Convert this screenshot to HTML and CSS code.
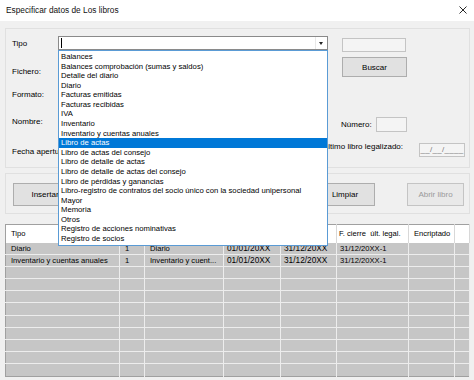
FILE: index.html
```html
<!DOCTYPE html>
<html>
<head>
    <title>Especificar datos de Los libros</title>
    <link rel="stylesheet" href="styles.css">
</head>
<body>

<div class="window">
    <div class="titlebar">
        <span class="title">Especificar datos de Los libros</span>
        <svg class="close" width="8" height="8" viewBox="0 0 8 8">
            <path d="M0.5 0.5L7.5 7.5M7.5 0.5L0.5 7.5" stroke="#111" stroke-width="0.9" fill="none"/>
        </svg>
    </div>

    <div class="client">
        <div class="group group-datos">
            <span class="lbl lbl-tipo">Tipo</span>
            <div class="combo">
                <span class="caret"></span>
                <span class="combo-arrow"></span>
                <ul class="dropdown">
                    <li>Balances</li>
                    <li>Balances comprobación (sumas y saldos)</li>
                    <li>Detalle del diario</li>
                    <li>Diario</li>
                    <li>Facturas emitidas</li>
                    <li>Facturas recibidas</li>
                    <li>IVA</li>
                    <li>Inventario</li>
                    <li>Inventario y cuentas anuales</li>
                    <li class="selected">Libro de actas</li>
                    <li>Libro de actas del consejo</li>
                    <li>Libro de detalle de actas</li>
                    <li>Libro de detalle de actas del consejo</li>
                    <li>Libro de pérdidas y ganancias</li>
                    <li>Libro-registro de contratos del socio único con la sociedad unipersonal</li>
                    <li>Mayor</li>
                    <li>Memoria</li>
                    <li>Otros</li>
                    <li>Registro de acciones nominativas</li>
                    <li>Registro de socios</li>
                </ul>
            </div>
            <div class="textbox tb-ruta"></div>

            <span class="lbl lbl-fichero">Fichero:</span>
            <button class="btn btn-buscar">Buscar</button>

            <span class="lbl lbl-formato">Formato:</span>

            <span class="lbl lbl-nombre">Nombre:</span>
            <div class="numero">
                <span class="lbl-numero">Número:</span>
                <div class="textbox tb-numero"></div>
            </div>

            <span class="lbl lbl-fecha">Fecha apertura</span>
            <div class="legalizado">
                <span class="lbl-legal">último libro legalizado:</span>
                <div class="textbox tb-fecha">__/__/____</div>
            </div>
        </div>

        <div class="group group-botones">
            <button class="btn btn-insertar">Insertar</button>
            <button class="btn btn-limpiar">Limpiar</button>
            <button class="btn btn-abrir" disabled>Abrir libro</button>
        </div>

        <table class="grid">
            <colgroup>
                <col style="width:114px">
                <col style="width:25px">
                <col style="width:79px">
                <col style="width:57px">
                <col style="width:56px">
                <col style="width:72px">
                <col style="width:46px">
                <col>
            </colgroup>
            <thead>
                <tr>
                    <th>Tipo</th>
                    <th></th>
                    <th></th>
                    <th></th>
                    <th></th>
                    <th class="wide">F. cierre  últ. legal.</th>
                    <th>Encriptado</th>
                    <th></th>
                </tr>
            </thead>
            <tbody>
                <tr>
                    <td>Diario</td>
                    <td>1</td>
                    <td>Diario</td>
                    <td class="date">01/01/20XX</td>
                    <td class="date">31/12/20XX</td>
                    <td>31/12/20XX-1</td>
                    <td></td>
                    <td></td>
                </tr>
                <tr>
                    <td>Inventario y cuentas anuales</td>
                    <td>1</td>
                    <td>Inventario y cuent...</td>
                    <td class="date">01/01/20XX</td>
                    <td class="date">31/12/20XX</td>
                    <td>31/12/20XX-1</td>
                    <td></td>
                    <td></td>
                </tr>
                <tr><td></td><td></td><td></td><td></td><td></td><td></td><td></td><td></td></tr>
                <tr><td></td><td></td><td></td><td></td><td></td><td></td><td></td><td></td></tr>
                <tr><td></td><td></td><td></td><td></td><td></td><td></td><td></td><td></td></tr>
                <tr><td></td><td></td><td></td><td></td><td></td><td></td><td></td><td></td></tr>
                <tr><td></td><td></td><td></td><td></td><td></td><td></td><td></td><td></td></tr>
                <tr><td></td><td></td><td></td><td></td><td></td><td></td><td></td><td></td></tr>
                <tr><td></td><td></td><td></td><td></td><td></td><td></td><td></td><td></td></tr>
                <tr><td></td><td></td><td></td><td></td><td></td><td></td><td></td><td></td></tr>
                <tr><td></td><td></td><td></td><td></td><td></td><td></td><td></td><td></td></tr>
            </tbody>
        </table>
    </div>
</div>

</body>
</html>
```

FILE: styles.css
```css
body {
    margin: 0;
    background: #f0f0f0;
    font-family: "Liberation Sans", Arial, sans-serif;
    font-size: 8px;
    color: #000;
}

.window {
    width: 474px;
    height: 380px;
    overflow: hidden;
    background: #f0f0f0;
}

.titlebar {
    height: 21px;
    background: #fff;
    display: flex;
    align-items: center;
    justify-content: space-between;
    padding: 0 7px 1px 6px;
    box-sizing: border-box;
}

.title {
    font-size: 8.3px;
    color: #111;
}

.client {
    padding: 7px 4px 0 5px;
}

.group {
    border: 1px solid #e0e0e0;
    box-sizing: border-box;
}

/* datos del libro */
.group-datos {
    height: 140px;
    padding: 7px 4px 0 6px;
    display: grid;
    grid-template-columns: 46px 270px 14px 1fr;
    grid-template-rows: 16px 28px 22px 31px 27px;
}

.lbl {
    grid-column: 1;
    white-space: nowrap;
    line-height: 14px;
}

.lbl-tipo {
    grid-row: 1;
    line-height: 16px;
}

.lbl-fichero {
    grid-row: 2;
    align-self: end;
    line-height: 16px;
}

.lbl-formato {
    grid-row: 3;
    align-self: end;
}

.lbl-nombre {
    grid-row: 4;
    margin-top: 13px;
}

.lbl-fecha {
    grid-row: 5;
    margin-top: 12px;
}

.combo {
    grid-column: 2;
    grid-row: 1;
    position: relative;
    height: 14px;
    background: #fff;
    border: 1px solid #8a8a8a;
    box-sizing: border-box;
}

.caret {
    position: absolute;
    left: 2px;
    top: 1px;
    width: 1px;
    height: 10px;
    background: #000;
}

.combo-arrow {
    position: absolute;
    right: 0;
    top: 0;
    width: 11px;
    height: 12px;
    border-left: 1px solid #e8e8e8;
}

.combo-arrow::after {
    content: "";
    position: absolute;
    left: 3px;
    top: 5px;
    border-left: 2.5px solid transparent;
    border-right: 2.5px solid transparent;
    border-top: 3px solid #222;
}

.dropdown {
    position: absolute;
    left: -1px;
    top: 13px;
    width: 270px;
    margin: 0;
    padding: 1px 0;
    list-style: none;
    background: #fff;
    border: 1px solid #5a9bd5;
    box-sizing: border-box;
    z-index: 10;
    font-size: 7.7px;
}

.dropdown li {
    height: 9.58px;
    line-height: 9.58px;
    padding-left: 2px;
    white-space: nowrap;
}

.dropdown li.selected {
    background: #0078d7;
    color: #fff;
}

.textbox {
    background: #f4f4f4;
    border: 1px solid #c4c4c4;
    box-sizing: border-box;
}

.tb-ruta {
    grid-column: 4;
    grid-row: 1;
    width: 64px;
    height: 14px;
    margin-top: 2px;
}

.btn {
    font-family: inherit;
    font-size: 8px;
    color: #000;
    background: #e1e1e1;
    border: 1px solid #adadad;
    border-radius: 0;
    padding: 0;
    box-sizing: border-box;
}

.btn-buscar {
    grid-column: 4;
    grid-row: 2;
    width: 65px;
    height: 20px;
    margin-top: 5px;
}

.numero {
    grid-column: 4;
    grid-row: 4;
    display: flex;
    margin-top: 15px;
    margin-left: -1px;
}

.lbl-numero {
    width: 35px;
    line-height: 15px;
}

.tb-numero {
    width: 31px;
    height: 15px;
}

.legalizado {
    grid-column: 2 / 5;
    grid-row: 5;
    display: flex;
    justify-content: flex-end;
    align-items: flex-start;
}

.lbl-legal {
    margin-top: 7px;
    line-height: 14px;
    white-space: nowrap;
}

.tb-fecha {
    width: 46px;
    height: 14px;
    margin: 10px 0 0 16px;
    color: #7a7a7a;
    line-height: 12px;
    text-align: center;
    letter-spacing: 0.3px;
}

/* botones */
.group-botones {
    height: 41px;
    margin-top: 5px;
    padding: 9px 0 0 7px;
    display: flex;
    align-items: flex-start;
}

.group-botones .btn {
    height: 23px;
}

.btn-insertar {
    width: 64px;
}

.btn-limpiar {
    width: 60px;
    margin-left: 238px;
}

.btn-abrir {
    width: 57px;
    margin-left: 32px;
    background: #e9e9e9;
    border-color: #c4c4c4;
    color: #9a9a9a;
}

/* tabla de libros */
.grid {
    width: 465px;
    margin-top: 10px;
    border-collapse: collapse;
    table-layout: fixed;
    border: 1px solid #a0a0a0;
    background: #c6c6c6;
    font-size: 7.6px;
}

.grid th {
    height: 17.5px;
    padding: 0 0 0 5px;
    background: #fff;
    font-weight: normal;
    text-align: left;
    border-right: 1px solid #d8d8d8;
    white-space: nowrap;
    overflow: hidden;
}

.grid th.wide {
    white-space: pre;
    padding-left: 2px;
}

.grid td {
    height: 11.2px;
    padding: 0 0 0 3px;
    border-right: 1px solid #ededed;
    border-bottom: 1px solid #ededed;
    white-space: nowrap;
    overflow: hidden;
    line-height: 11px;
}

.grid td:first-child {
    padding-left: 5px;
}

.grid td:nth-child(2) {
    padding-left: 5px;
}

.grid td:nth-child(3) {
    padding-left: 5px;
}

.grid td.date {
    font-size: 8.3px;
    padding-left: 3px;
}

.grid tr:last-child td {
    border-bottom: none;
}
```
